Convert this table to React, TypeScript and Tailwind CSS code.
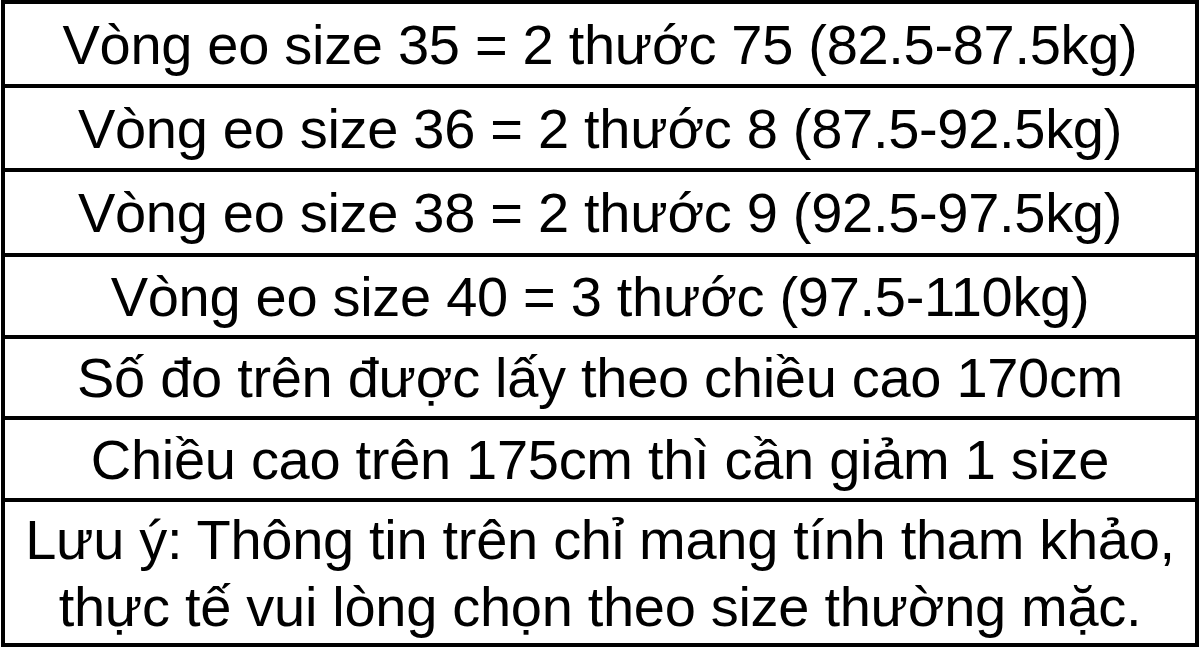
const ROWS: { text: string; h: string }[] = [
  { text: 'Vòng eo size 35 = 2 thước 75 (82.5-87.5kg)', h: 'h-[80px]' },
  { text: 'Vòng eo size 36 = 2 thước 8 (87.5-92.5kg)', h: 'h-[84px]' },
  { text: 'Vòng eo size 38 = 2 thước 9 (92.5-97.5kg)', h: 'h-[85px]' },
  { text: 'Vòng eo size 40 = 3 thước (97.5-110kg)', h: 'h-[82px]' },
  { text: 'Số đo trên được lấy theo chiều cao 170cm', h: 'h-[81px]' },
  { text: 'Chiều cao trên 175cm thì cần giảm 1 size', h: 'h-[82px]' },
];

export default function App() {
  return (
    <div className="w-[1199px] h-[654px] bg-white">
      <div className="ml-[1px] w-[1198px] border-[4px] border-black text-black text-[56px] leading-[67px] tracking-[-0.3px] font-['Liberation_Sans',Arial,sans-serif]">
        {ROWS.map((r, i) => (
          <div
            key={r.text}
            className={`${r.h} flex items-center justify-center whitespace-nowrap ${i > 0 ? 'border-t-[4px] border-black' : ''}`}
          >
            {r.text}
          </div>
        ))}
        <div className="h-[145px] border-t-[4px] border-black flex flex-col items-center justify-center">
          <span className="whitespace-nowrap">Lưu ý: Thông tin trên chỉ mang tính tham khảo,</span>
          <span className="whitespace-nowrap">thực tế vui lòng chọn theo size thường mặc.</span>
        </div>
      </div>
    </div>
  );
}
